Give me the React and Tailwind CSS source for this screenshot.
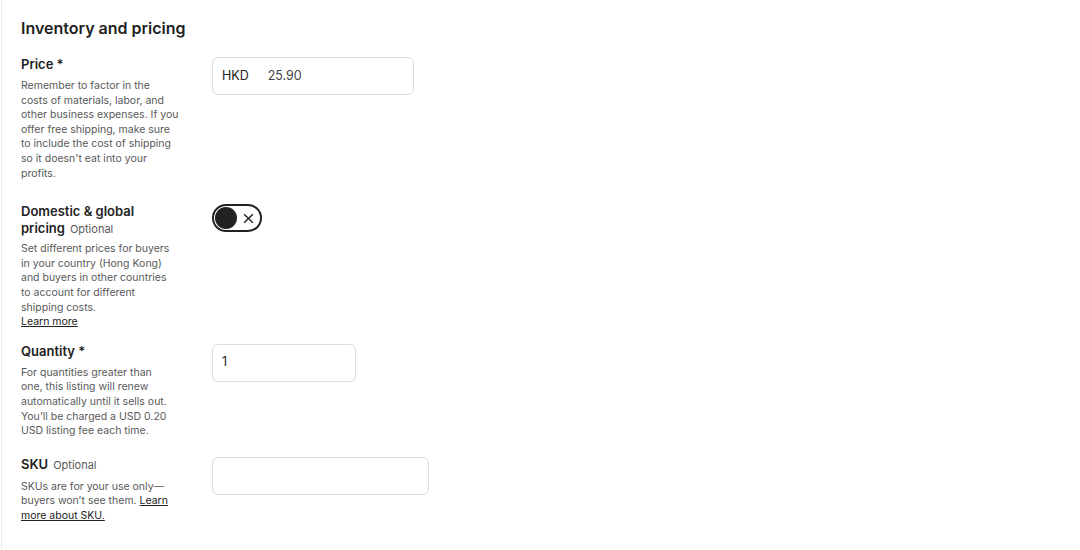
import React from 'react';

const font = { fontFamily: 'Inter, "Liberation Sans", sans-serif' };

const Row = ({ className = '', left, right }) => (
  <div className={`flex items-start ${className}`}>
    <div className="w-[158px] shrink-0">{left}</div>
    <div className="ml-[33px] mt-[1px]">{right}</div>
  </div>
);

const Label = ({ children, optional }) => (
  <p className="text-[13px] leading-[17px] font-semibold text-[#222]">
    {children}
    {optional && <span className="ml-[5px] text-[11px] leading-[17px] font-normal text-[#595959]">Optional</span>}
  </p>
);

const Desc = ({ children, className = 'mt-[6px]' }) => (
  <p className={`${className} text-[10.5px] leading-[14.6px] text-[#595959]`}>{children}</p>
);

const Toggle = () => (
  <div className="flex h-[28px] w-[50px] items-center rounded-full border-2 border-[#222] bg-white px-[1px]">
    <div className="h-[22px] w-[22px] rounded-full bg-[#222]" />
    <svg className="ml-[5px]" width="13" height="13" viewBox="0 0 12 12" fill="none" stroke="#222" strokeWidth="1.3">
      <path d="M2 2l8 8M10 2l-8 8" />
    </svg>
  </div>
);

export default function App() {
  return (
    <div className="min-h-[550px] bg-white" style={font}>
      <div className="ml-[1px] min-h-[550px] border-l border-[#ececec] pl-[19px] pt-[17px]">
        <h2 className="text-[16px] leading-[22px] font-semibold text-[#222]">Inventory and pricing</h2>

        <Row
          className="mt-[17px]"
          left={
            <>
              <Label>Price *</Label>
              <Desc>
                Remember to factor in the<br />
                costs of materials, labor, and<br />
                other business expenses. If you<br />
                offer free shipping, make sure<br />
                to include the cost of shipping<br />
                so it doesn't eat into your<br />
                profits.
              </Desc>
            </>
          }
          right={
            <div className="flex h-[38px] w-[202px] items-center rounded-[6px] border border-[#dcdcdc] px-[9px] text-[12.5px]">
              <span className="text-[#222]">HKD</span>
              <span className="ml-[19px] text-[#444]">25.90</span>
            </div>
          }
        />

        <Row
          className="mt-[22px]"
          left={
            <>
              <Label optional>Domestic &amp; global pricing</Label>
              <Desc className="mt-[4px]">
                Set different prices for buyers in your country (Hong Kong) and buyers in other countries to account
                for different shipping costs.
                <br />
                <a className="underline text-[#222]" href="#">Learn more</a>
              </Desc>
            </>
          }
          right={<Toggle />}
        />

        <Row
          className="mt-[13px]"
          left={
            <>
              <Label>Quantity *</Label>
              <Desc>
                For quantities greater than<br />
                one, this listing will renew<br />
                automatically until it sells out.<br />
                You’ll be charged a USD 0.20<br />
                USD listing fee each time.
              </Desc>
            </>
          }
          right={
            <div className="flex h-[38px] w-[144px] items-center rounded-[6px] border border-[#dcdcdc] px-[9px] text-[12.5px] text-[#222]">
              1
            </div>
          }
        />

        <Row
          className="mt-[17px]"
          left={
            <>
              <Label optional>SKU</Label>
              <Desc>
                SKUs are for your use only—<br />
                buyers won’t see them.{' '}
                <a className="underline text-[#222]" href="#">Learn more about SKU.</a>
              </Desc>
            </>
          }
          right={<div className="h-[38px] w-[217px] rounded-[6px] border border-[#dcdcdc]" />}
        />
      </div>
    </div>
  );
}
